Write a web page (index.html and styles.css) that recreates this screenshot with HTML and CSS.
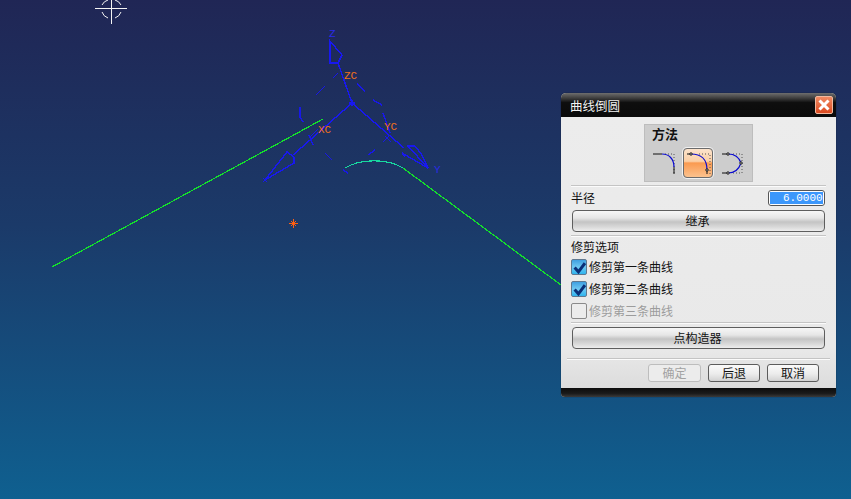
FILE: index.html
```html
<!DOCTYPE html>
<html lang="zh">
<head>
<meta charset="utf-8">
<title>曲线倒圆</title>
<link rel="stylesheet" href="styles.css">
</head>
<body>
<main class="viewport">
  <svg class="scene" width="851" height="499" viewBox="0 0 851 499" aria-hidden="true">
    <g class="cursor">
      <path class="crisp" d="M95 8.500H127M111.500 -4V24"/>
      <path d="M108 0A9.500 9.500 0 0 0 102 5M102 12A9.500 9.500 0 0 0 108 18M115 0A9.500 9.500 0 0 1 121 5M121 12A9.500 9.500 0 0 1 115 18"/>
    </g>
    <path class="green" d="M52 267L323 119"/>
    <path class="green" d="M403 168L561 285"/>
    <path class="teal" d="M345 168C358 160 385 157 403 168"/>
    <g class="axis">
      <path d="M352 103L338 63M352 103L293 155M352 103L404 148"/>
      <path d="M330 41V63H338L342 55Z"/>
      <path d="M265 180L287 152L294 157V163Z"/>
      <path d="M428 168L408 146H415L422 155ZM428 168L402 153L405 157"/>
      <path d="M349 103H355M352 100V106M263 178L267 182M263 182L267 178"/>
    </g>
    <g class="dash">
      <path d="M338 73L333 78M325 86L316 95M300 107L300 117L303 122M309 135L313 145M325 153L332 160M343 170L348 173"/>
      <path d="M368 155L375 150M383 142L390 135M383 113L390 133M357 83L365 92M373 100L382 105"/>
      <path d="M310 137L318 129M391 142L385 136"/>
    </g>
    <g class="labels">
      <text class="tag" x="344" y="79">ZC</text>
      <text class="tag" x="318" y="133">XC</text>
      <text class="tag" x="384" y="130">YC</text>
      <text class="tag axis-tag" x="329" y="37">Z</text>
      <text class="tag axis-tag" x="434" y="173">Y</text>
    </g>
    <path class="star" d="M289 223.500H298M293.500 219V228M291 221L296 226M296 221L291 226"/>
  </svg>

  <section class="dialog">
    <header class="titlebar">
      <span class="title">曲线倒圆</span>
      <span class="close">
        <svg width="12" height="12" viewBox="0 0 12 12"><path d="M1.500 1.500L10.500 10.500M10.500 1.500L1.500 10.500"/></svg>
      </span>
    </header>

    <div class="body">
      <div class="method">
        <div class="method-title">方法</div>
        <div class="method-icons">
          <span class="mi">
            <svg width="26" height="26" viewBox="0 0 26 26">
              <path class="dots" d="M13 4H22V24"/>
              <path class="blk" d="M1 4H10M22 17V24"/>
              <path class="blu" d="M10 4C17 4 22 9 22 17"/>
            </svg>
          </span>
          <span class="mi mi-on">
            <svg width="26" height="26" viewBox="0 0 26 26">
              <path class="dots" d="M14 4H25V24"/>
              <path class="blk" d="M2 4H6M22 20V24"/>
              <path class="blu" d="M6 4C16 4 22 9 22 20"/>
              <circle class="node" cx="6" cy="4" r="1.200"/>
              <circle class="node" cx="22" cy="20" r="1.200"/>
            </svg>
          </span>
          <span class="mi">
            <svg width="26" height="26" viewBox="0 0 26 26">
              <path class="dots" d="M15 4H24V23H15"/>
              <path class="blk" d="M4 4H10M4 23H10"/>
              <path class="blu" d="M10 4C17 4 21 7 23 13C21 19 17 23 10 23"/>
              <circle class="node" cx="10" cy="4" r="1.200"/>
              <circle class="node" cx="10" cy="23" r="1.200"/>
              <circle class="node" cx="23" cy="13" r="1.200"/>
            </svg>
          </span>
        </div>
      </div>

      <hr class="sep sep-method">

      <div class="radius-row">
        <label class="label">半径</label>
        <span class="field"><span class="field-sel">6.00000</span></span>
      </div>

      <button class="wide wide-inherit" type="button">继承</button>

      <hr class="sep sep-inherit">

      <div class="label section-label">修剪选项</div>

      <div class="check-row">
        <span class="check on"><svg width="13" height="13" viewBox="0 0 12 12"><path d="M1.500 6L5 10L11 2"/></svg></span>
        <span>修剪第一条曲线</span>
      </div>
      <div class="check-row">
        <span class="check on"><svg width="13" height="13" viewBox="0 0 12 12"><path d="M1.500 6L5 10L11 2"/></svg></span>
        <span>修剪第二条曲线</span>
      </div>
      <div class="check-row off">
        <span class="check"></span>
        <span>修剪第三条曲线</span>
      </div>

      <hr class="sep sep-point">

      <button class="wide" type="button">点构造器</button>

      <hr class="sep sep-foot">

      <div class="actions">
        <button class="act disabled" type="button">确定</button>
        <button class="act" type="button">后退</button>
        <button class="act" type="button">取消</button>
      </div>
    </div>
    <div class="bottombar"></div>
  </section>
</main>
</body>
</html>
```
FILE: styles.css
```css
* { box-sizing: border-box; }
html, body { margin: 0; padding: 0; }
body {
  width: 851px;
  height: 499px;
  overflow: hidden;
  font-family: "Noto Sans CJK SC", "Liberation Sans", sans-serif;
  font-size: 12px;
  color: #111;
}
.viewport {
  position: relative;
  width: 851px;
  height: 499px;
  background: linear-gradient(180deg, #202655 0%, #1b3a69 45%, #0f6090 100%);
  overflow: hidden;
}
.scene { position: absolute; left: 0; top: 0; }
.scene path { fill: none; }
.cursor path { stroke: #f4f4f4; stroke-width: 1; }
.green { stroke: #14e02c; stroke-width: 1.200; shape-rendering: crispEdges; }
.teal { stroke: #18d8a0; stroke-width: 1.200; shape-rendering: crispEdges; }
.axis path { stroke: #1818f0; stroke-width: 1.400; shape-rendering: crispEdges; }
.dash path { stroke: #1818e8; stroke-width: 1.400; shape-rendering: crispEdges; }
.crisp { shape-rendering: crispEdges; }
.tag {
  font-family: "Liberation Mono", monospace;
  font-size: 11px;
  fill: #f0701c;
}
.axis-tag { fill: #2a2ae8; }
.star { stroke: #ff5f10; stroke-width: 1; shape-rendering: crispEdges; }

.dialog {
  position: absolute;
  left: 561px;
  top: 93px;
  width: 275px;
  height: 304px;
  display: flex;
  flex-direction: column;
  background: #e9e9e9;
  border-radius: 5px 5px 4px 4px;
  overflow: hidden;
  box-shadow: 0 0 1px #111;
}
.titlebar {
  height: 24px;
  flex: none;
  display: flex;
  align-items: center;
  justify-content: space-between;
  padding: 0 3px 0 9px;
  background: linear-gradient(180deg, #6e6e6e 0%, #3c3c3c 22%, #0e0e0e 40%, #0a0a0a 100%);
}
.title { color: #f2f2f2; font-size: 12.500px; line-height: 1; padding-top: 2px; }
.close {
  width: 18px;
  height: 18px;
  display: flex;
  align-items: center;
  justify-content: center;
  border-radius: 2px;
  border: 1px solid #f0b9a0;
  background: linear-gradient(180deg, #f08a63 0%, #dc4a20 100%);
}
.close path { stroke: #fff; stroke-width: 3; fill: none; }

.body {
  flex: 1;
  display: flex;
  flex-direction: column;
  padding: 7px 10px 0;
  background: linear-gradient(180deg, #ececec 0%, #e9e9e9 85%, #dcdcdc 100%);
}
.method {
  align-self: center;
  width: 109px;
  height: 58px;
  background: #cdcdcd;
  border: 1px solid #bdbdbd;
  display: flex;
  flex-direction: column;
  padding: 0 0 0 7px;
}
.method-title { font-size: 13px; font-weight: 700; line-height: 18px; height: 18px; }
.method-icons { display: flex; gap: 3px; align-items: center; margin-left: -2px; margin-top: 5px; }
.mi { width: 30px; height: 30px; flex: none; display: flex; align-items: center; justify-content: center; }
.mi-on {
  border: 1.500px solid #6b6b6b;
  border-radius: 4px;
  background: linear-gradient(180deg, #fbe3cc 0%, #fbcfa5 44%, #fa9a50 50%, #fcc28e 100%);
  box-shadow: 0 0 0 1px #f1f1f1;
}
.dots { fill: none; stroke: #555; stroke-width: 1; stroke-dasharray: 1 2; }
.blk { fill: none; stroke: #111; stroke-width: 1; }
.blu { fill: none; stroke: #0b0bd0; stroke-width: 1.200; }
.node { fill: #e6e6e6; stroke: #111; stroke-width: 1; }

.sep { border: 0; margin: 0; height: 2px; flex: none; border-top: 1px solid #c4c4c4; border-bottom: 1px solid #fbfbfb; }
.sep-method { margin-top: 3px; }
.sep-inherit { margin-top: 3px; }
.sep-point { margin-top: 3px; }
.sep-foot { margin: 9px -4px 0; }

.radius-row {
  display: flex;
  align-items: center;
  justify-content: space-between;
  height: 16px;
  margin-top: 3px;
  width: 254px;
}
.label { line-height: 16px; }
.field {
  width: 57px;
  height: 16px;
  border: 1.500px solid #555;
  border-radius: 3px;
  background: #fff;
  padding: 1px;
  display: flex;
  overflow: hidden;
}
.field-sel {
  flex: 1;
  min-width: 0;
  padding-left: 13px;
  background: #3c97fb;
  color: #fff;
  font-family: "Liberation Mono", monospace;
  font-size: 11px;
  line-height: 12px;
  overflow: hidden;
  white-space: nowrap;
}
.wide {
  display: block;
  flex: none;
  width: 253px;
  height: 22px;
  padding: 0 2px 2px 0;
  font: inherit;
  font-size: 12px;
  color: #111;
  border: 1.500px solid #5e5e5e;
  border-radius: 4px;
  background: linear-gradient(180deg, #f7f7f7 0%, #e6e6e6 35%, #c4c4c4 55%, #d9d9d9 80%, #ededed 100%);
  margin-left: 1px;
}
.wide-inherit { margin-top: 4px; }
.section-label { margin-top: 2px; height: 16px; }
.check-row {
  display: flex;
  align-items: center;
  gap: 2px;
  height: 16px;
  margin-top: 6px;
  line-height: 16px;
}
.section-label + .check-row { margin-top: 4px; }
.check {
  width: 16px;
  height: 16px;
  flex: none;
  border: 1px solid #8a8a8a;
  border-radius: 2px;
  background: #ececec;
  display: flex;
  align-items: center;
  justify-content: center;
}
.check.on {
  border-color: #5f7890;
  background: linear-gradient(180deg, #3f9fe0 0%, #6fc8f2 50%, #2fb4ee 100%);
}
.check path { fill: none; stroke: #0a2f78; stroke-width: 2.800; }
.off { color: #9c9c9c; }
.sep-point + .wide { margin-top: 3px; }
.actions {
  display: flex;
  justify-content: flex-end;
  gap: 7px;
  padding-right: 7px;
  margin-top: 4px;
}
.act {
  width: 52px;
  height: 18px;
  padding: 0;
  font: inherit;
  font-size: 12px;
  line-height: 14px;
  color: #111;
  border: 1.500px solid #5c5c5c;
  border-radius: 3px;
  background: linear-gradient(180deg, #fafafa 0%, #ececec 55%, #d2d2d2 100%);
}
.act.disabled {
  width: 53px;
  color: #a2a2a2;
  border-color: #bdbdbd;
  background: #ececec;
}
.bottombar {
  flex: none;
  height: 9px;
  background: linear-gradient(180deg, #0c0c0c 0%, #1a1a1a 60%, #3a3a3a 100%);
}
```
